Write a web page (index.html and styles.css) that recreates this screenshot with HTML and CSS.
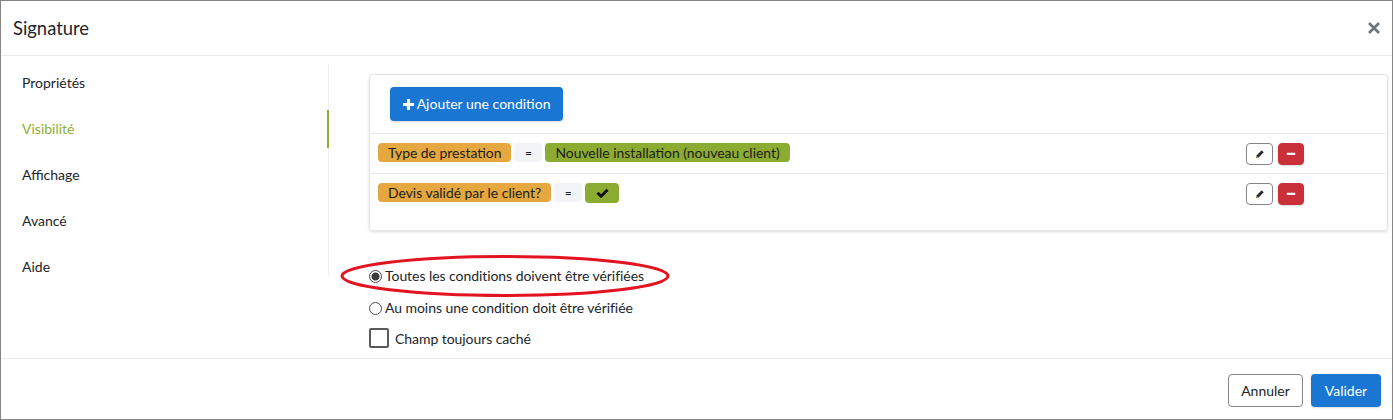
FILE: index.html
```html
<!DOCTYPE html>
<html lang="fr">
<head>
  <meta charset="UTF-8">
  <title>Signature</title>
  <link rel="stylesheet" href="styles.css">
</head>
<body>
  <div class="modal">
    <div class="modal-header">
      <span class="modal-title">Signature</span>
      <svg class="close-icon" viewBox="0 0 12 12"><path d="M1 1 L11 11 M11 1 L1 11"/></svg>
    </div>

    <div class="modal-body">
      <ul class="side-nav">
        <li>Propriétés</li>
        <li class="active">Visibilité</li>
        <li>Affichage</li>
        <li>Avancé</li>
        <li>Aide</li>
      </ul>

      <div class="content">
        <div class="card">
          <div class="card-top">
            <button class="btn btn-primary btn-add">
              <svg class="plus-icon" viewBox="0 0 12 12"><path d="M4.3 0h3.4v4.3H12v3.4H7.7V12H4.3V7.7H0V4.3h4.3z"/></svg>
              Ajouter une condition
            </button>
          </div>
          <div class="cond-row">
            <div class="tags">
              <span class="tag tag-field">Type de prestation</span>
              <span class="tag tag-op">=</span>
              <span class="tag tag-value">Nouvelle installation (nouveau client)</span>
            </div>
            <div class="row-actions">
              <button class="btn-icon btn-edit"><svg viewBox="0 0 12 12"><path class="pen-body" d="M8 1.6 L10.4 4 L4 10.4 L1.6 8 Z"/><path class="pen-tip" d="M1.6 8 L4 10.4 L0.8 11.2 Z"/></svg></button>
              <button class="btn-icon btn-remove"><svg viewBox="0 0 12 12"><rect x="1" y="4.6" width="10" height="2.6" rx="0.5"/></svg></button>
            </div>
          </div>
          <div class="cond-row cond-row-last">
            <div class="tags">
              <span class="tag tag-field">Devis validé par le client?</span>
              <span class="tag tag-op">=</span>
              <span class="tag tag-value tag-check"><svg viewBox="0 0 14 12"><path d="M0.4 6.4 L2.6 4.1 L5.4 6.9 L11.4 0.9 L13.6 3.2 L5.4 11.3 Z"/></svg></span>
            </div>
            <div class="row-actions">
              <button class="btn-icon btn-edit"><svg viewBox="0 0 12 12"><path class="pen-body" d="M8 1.6 L10.4 4 L4 10.4 L1.6 8 Z"/><path class="pen-tip" d="M1.6 8 L4 10.4 L0.8 11.2 Z"/></svg></button>
              <button class="btn-icon btn-remove"><svg viewBox="0 0 12 12"><rect x="1" y="4.6" width="10" height="2.6" rx="0.5"/></svg></button>
            </div>
          </div>
        </div>

        <div class="options">
          <label class="radio-line"><span class="radio checked"></span>Toutes les conditions doivent être vérifiées</label>
          <label class="radio-line"><span class="radio"></span>Au moins une condition doit être vérifiée</label>
          <label class="check-line"><span class="checkbox"></span>Champ toujours caché</label>
        </div>
      </div>

      <svg class="highlight" viewBox="0 0 332 46"><ellipse cx="166" cy="23" rx="163" ry="19.5"/></svg>
    </div>

    <div class="modal-footer">
      <button class="btn btn-default">Annuler</button>
      <button class="btn btn-primary">Valider</button>
    </div>
  </div>
</body>
</html>
```

FILE: styles.css
```css
* {
  box-sizing: border-box;
}

html, body {
  margin: 0;
  padding: 0;
}

body {
  font-family: Lato, 'Open Sans', sans-serif;
  font-size: 14px;
  color: #212529;
  background: #fff;
}

.modal {
  height: 420px;
  border: 1px solid #858585;
  display: flex;
  flex-direction: column;
  overflow: hidden;
}

.modal-header {
  height: 55px;
  flex: none;
  display: flex;
  align-items: center;
  justify-content: space-between;
  padding: 0 12px;
  border-bottom: 1px solid #e9ecef;
}

.modal-title {
  font-size: 18.4px;
}

.close-icon {
  width: 12px;
  height: 12px;
  fill: none;
  stroke: #6c757d;
  stroke-width: 2.6;
}

.modal-body {
  flex: 1;
  display: flex;
  position: relative;
  min-height: 0;
}

.side-nav {
  list-style: none;
  margin: 8px 0 0;
  padding: 0;
  width: 328px;
  height: 212px;
  flex: none;
  border-right: 1px solid #eceeef;
}

.side-nav li {
  height: 38px;
  line-height: 38px;
  margin-bottom: 8px;
  margin-right: -1px;
  padding-left: 21px;
}

.side-nav li.active {
  color: #8db030;
  border-right: 2px solid #8db030;
}

.content {
  flex: 1;
  padding: 18px 4px 0 40px;
}

.card {
  height: 157px;
  border: 1px solid #e3e5e8;
  border-radius: 4px;
  box-shadow: 0 1px 3px rgba(0, 0, 0, 0.14);
}

.card-top {
  height: 59px;
  padding: 12px 20px;
  border-bottom: 1px solid #e9ecef;
}

.btn {
  font-family: inherit;
  font-size: 14px;
  height: 33px;
  border-radius: 4px;
  border: 1px solid transparent;
  padding: 0;
  cursor: pointer;
}

.btn-primary {
  width: 70px;
  background: #1976d2;
  color: #fff;
  box-shadow: 0 1px 2px rgba(0, 0, 0, 0.15);
}

.btn-default {
  width: 75px;
  background: #fff;
  color: #212529;
  border-color: #858585;
}

.btn-add {
  height: 34px;
  width: 173px;
  padding: 0 0 2px;
  white-space: nowrap;
}

.plus-icon {
  width: 11px;
  height: 11px;
  fill: #fff;
  vertical-align: -1px;
}

.cond-row {
  height: 40px;
  display: flex;
  justify-content: space-between;
  padding: 9px 83px 0 8px;
  border-bottom: 1px solid #e9ecef;
}

.cond-row-last {
  border-bottom: none;
}

.tags {
  display: flex;
  align-items: flex-start;
  gap: 3px;
}

.tag {
  height: 19px;
  line-height: 20px;
  border-radius: 4px;
  padding: 0 10px;
  font-size: 13.9px;
  color: #1c1c1c;
  white-space: nowrap;
}

.tag-field {
  background: #e5a73f;
}

.tag-op {
  background: #f1f3f7;
  font-size: 12px;
  padding: 0 10px;
  width: 28px;
  text-align: center;
}

.tag-value {
  background: #8bab31;
}

.tag-check {
  height: 20px;
  width: 34px;
  padding: 0;
  display: flex;
  align-items: center;
  justify-content: center;
}

.tag-check svg {
  width: 13px;
  height: 11px;
  fill: #111;
}

.row-actions {
  display: flex;
  gap: 5px;
}

.btn-icon {
  width: 27px;
  height: 22px;
  padding: 0;
  border-radius: 4px;
  display: flex;
  align-items: center;
  justify-content: center;
  cursor: pointer;
}

.btn-icon svg {
  width: 10px;
  height: 10px;
}

.btn-edit {
  background: #fff;
  border: 1px solid #858585;
}

.pen-body {
  fill: #26292d;
}

.pen-tip {
  fill: #b9792a;
}

.btn-remove {
  width: 26px;
  background: #c9303a;
  border: 1px solid #c9303a;
  box-shadow: 0 1px 2px rgba(0, 0, 0, 0.15);
}

.btn-remove svg {
  fill: #fff;
}

.options {
  padding-top: 28px;
  letter-spacing: -0.06px;
}

.radio-line {
  display: flex;
  align-items: center;
  height: 32px;
}

.radio {
  width: 13px;
  height: 13px;
  margin: 2px 3px 0 0;
  border: 1px solid #4a4a4a;
  border-radius: 50%;
  flex: none;
}

.radio.checked {
  background: radial-gradient(circle, #3b3b3b 0, #3b3b3b 3.6px, #fff 4.4px);
}

.check-line {
  display: flex;
  align-items: center;
  height: 28px;
  margin-top: 1px;
}

.checkbox {
  width: 20px;
  height: 20px;
  margin-right: 6px;
  border: 2px solid #5a5a5a;
  border-radius: 2px;
  flex: none;
}

.highlight {
  position: absolute;
  left: 338px;
  top: 197px;
  width: 332px;
  height: 46px;
  fill: none;
  stroke: #e3141f;
  stroke-width: 3;
  pointer-events: none;
}

.modal-footer {
  height: 61px;
  flex: none;
  display: flex;
  justify-content: flex-end;
  align-items: flex-start;
  gap: 8px;
  padding: 15px 11px 0 0;
  border-top: 1px solid #e9ecef;
}
```
